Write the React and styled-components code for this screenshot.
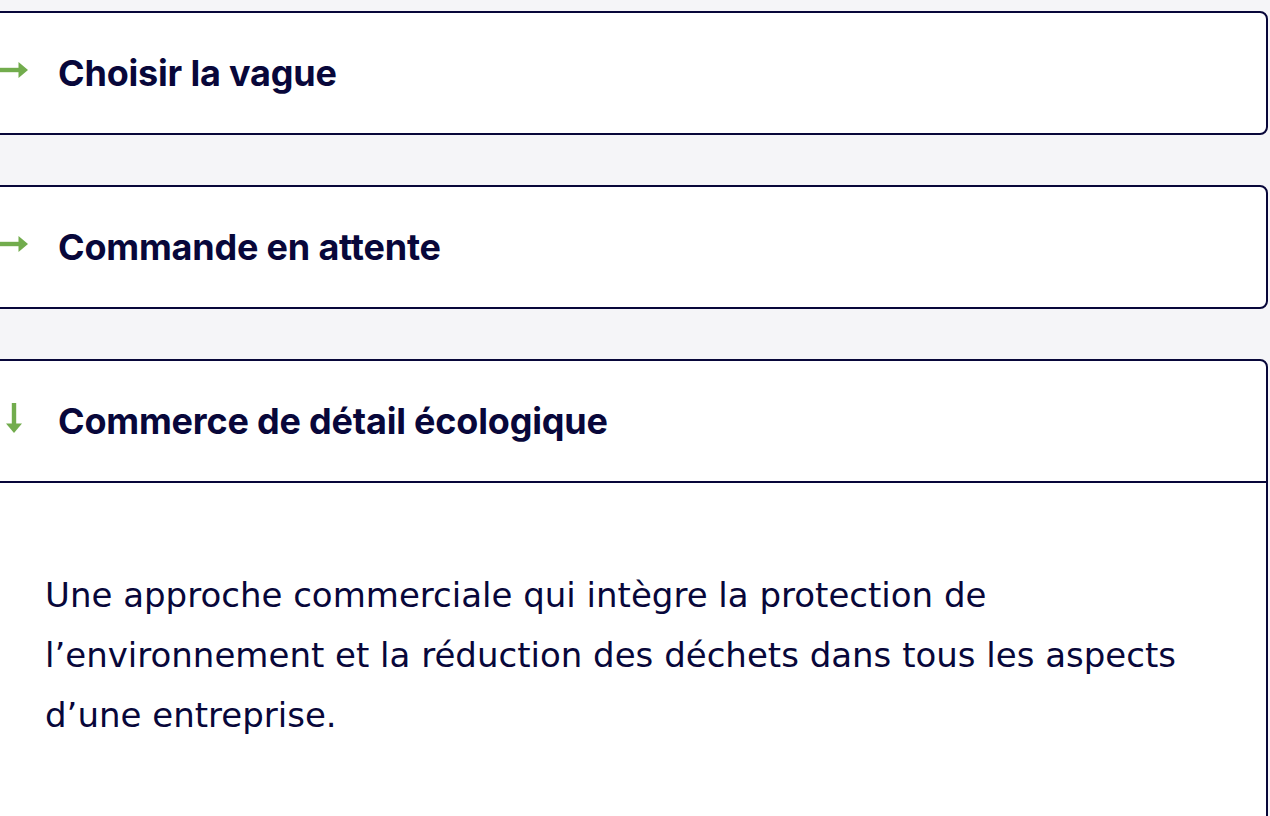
import React, { useState } from "react";
import styled, { createGlobalStyle } from "styled-components";

const GlobalStyle = createGlobalStyle`
  body {
    margin: 0;
    background: #f5f5f8;
    font-family: "Inter", "Liberation Sans", sans-serif;
    color: #08073a;
    overflow: hidden;
  }
`;

const List = styled.div`
  display: flex;
  flex-direction: column;
  gap: 50px;
  padding: 11px 2px 0 0;
  margin-left: -40px;
`;

const Item = styled.div`
  background: #fff;
  border: 2px solid #08073a;
  border-radius: 8px;
  overflow: hidden;
`;

const Header = styled.button`
  display: flex;
  align-items: center;
  width: 100%;
  height: ${(props) => (props.open ? "122px" : "120px")};
  padding: 0 0 0 36px;
  border: none;
  border-bottom: ${(props) => (props.open ? "2px solid #08073a" : "none")};
  background: transparent;
  cursor: pointer;
  font: inherit;
  color: inherit;
  text-align: left;
`;

const ArrowBox = styled.span`
  display: flex;
  flex: none;
  width: 32px;
  height: 32px;
  margin-top: ${(props) => (props.open ? "-4px" : "-6px")};
  transform: rotate(${(props) => (props.open ? "90deg" : "0deg")});
`;

const Title = styled.span`
  margin-left: 28px;
  font-size: 36px;
  font-weight: 700;
  letter-spacing: -0.2px;
`;

const Body = styled.div`
  padding: 82px 80px 90px 83px;
  font-family: "DejaVu Sans", "Inter", sans-serif;
  font-size: 34px;
  line-height: 60px;
`;

const Arrow = ({ open }) => (
  <ArrowBox open={open}>
    <svg width="32" height="32" viewBox="0 0 32 32">
      <rect x="0" y="13.8" width="23" height="4.4" fill="#72ac4d" />
      <path d="M20.5 8 L30 16 L20.5 24 Z" fill="#72ac4d" />
    </svg>
  </ArrowBox>
);

const items = [
  { title: "Choisir la vague", text: "" },
  { title: "Commande en attente", text: "" },
  {
    title: "Commerce de détail écologique",
    text: "Une approche commerciale qui intègre la protection de l’environnement et la réduction des déchets dans tous les aspects d’une entreprise.",
  },
];

export default function App() {
  const [openIndex, setOpenIndex] = useState(2);

  return (
    <>
      <GlobalStyle />
      <List>
        {items.map((item, index) => {
          const open = index === openIndex;
          return (
            <Item key={item.title}>
              <Header open={open} onClick={() => setOpenIndex(open ? -1 : index)}>
                <Arrow open={open} />
                <Title>{item.title}</Title>
              </Header>
              {open && <Body>{item.text}</Body>}
            </Item>
          );
        })}
      </List>
    </>
  );
}
